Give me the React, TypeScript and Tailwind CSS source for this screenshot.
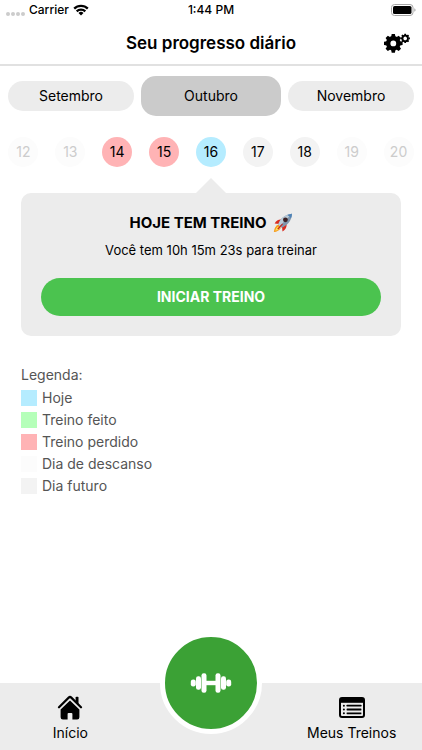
import { useState } from "react"
import clsx from "clsx"

type DayStatus = "today" | "done" | "missed" | "rest" | "future"

const statusColor: Record<DayStatus, string> = {
  today: "bg-[#b5ecff]",
  done: "bg-[#b5ffb9]",
  missed: "bg-[#ffb3b5]",
  rest: "bg-[#fcfcfc]",
  future: "bg-[#f3f3f3]",
}

const months = ["Setembro", "Outubro", "Novembro"]

const days: { day: number; status: DayStatus }[] = [
  { day: 12, status: "rest" },
  { day: 13, status: "rest" },
  { day: 14, status: "missed" },
  { day: 15, status: "missed" },
  { day: 16, status: "today" },
  { day: 17, status: "future" },
  { day: 18, status: "future" },
  { day: 19, status: "rest" },
  { day: 20, status: "rest" },
]

const legend: { label: string; status: DayStatus }[] = [
  { label: "Hoje", status: "today" },
  { label: "Treino feito", status: "done" },
  { label: "Treino perdido", status: "missed" },
  { label: "Dia de descanso", status: "rest" },
  { label: "Dia futuro", status: "future" },
]

function WifiIcon() {
  return (
    <svg viewBox="0 0 16 12" className="h-3 w-4" aria-hidden="true">
      <g fill="none" stroke="black" strokeWidth="2.3">
        <path d="M1.2 4.6a9.7 9.7 0 0 1 13.6 0" />
        <path d="M3.7 7.4a6.1 6.1 0 0 1 8.6 0" />
      </g>
      <path d="M5.5 9.1a3.5 3.5 0 0 1 5 0L8 11.6z" />
    </svg>
  )
}

function BatteryIcon() {
  return (
    <svg viewBox="0 0 25 12" className="h-3 w-[25px]" aria-hidden="true">
      <rect x="0.5" y="0.5" width="21.5" height="11" rx="3" fill="none" stroke="#a6a6a6" />
      <rect x="2" y="2" width="18.5" height="8" rx="1.6" />
      <path d="M23.3 4.2q1.3.6 1.3 1.8t-1.3 1.8z" fill="#a6a6a6" />
    </svg>
  )
}

function GearsIcon() {
  const angles = [0, 45, 90, 135]
  return (
    <svg viewBox="0 0 26 20" className="h-5 w-[26px]" aria-hidden="true">
      <g transform="translate(9.3 10.4)">
        <circle r="5.1" fill="none" stroke="black" strokeWidth="4.4" />
        {angles.map((a) => (
          <path key={a} transform={`rotate(${a})`} d="M-2.2-6.4-1.6-9.3h3.2L2.2-6.4zM-2.2 6.4l.6 2.9h3.2L2.2 6.4z" />
        ))}
      </g>
      <g transform="translate(21.2 5.4)">
        <circle r="2.7" fill="none" stroke="black" strokeWidth="1.8" />
        {angles.map((a) => (
          <path key={a} transform={`rotate(${a})`} d="M-1.1-3.1-.8-4.7H.8L1.1-3.1zM-1.1 3.1l.3 1.6H.8L1.1 3.1z" />
        ))}
      </g>
    </svg>
  )
}

function RocketIcon() {
  return (
    <svg viewBox="0 0 20 20" className="h-5 w-5" role="img" aria-label="Foguete">
      <path d="M5.5 11.5Q1.5 13 .8 19q4.8-.3 7-4z" fill="#f59a1c" />
      <path d="M5 13.5q-2.2 1.2-2.8 4.2 3-.3 4.6-2.3z" fill="#ffe25a" />
      <path d="M9 6.5Q4 5.8 1.6 10.6L6.2 11z" fill="#d92c20" />
      <path d="M13.6 10.8q.6 5-4.1 7.7L9 14z" fill="#d92c20" />
      <path d="M5.2 11.4C7.5 5.5 11.5 1.6 19 .8c-.6 7.6-4.8 11.6-10.4 14z" fill="#7f96ad" />
      <path d="M5.2 11.4C7.5 5.5 11.5 1.6 19 .8L6.8 13z" fill="#b9cbd8" />
      <path d="M14.2 1.9Q16.4 1 19 .8q-.2 2.7-1 4.8-1-2.6-3.8-3.7z" fill="#4d82b7" />
      <circle cx="12.4" cy="6.8" r="2.4" fill="#3c2023" />
      <path d="m4.2 15.8 5-5.2.8.7-4.7 5.2z" fill="#c9251d" />
    </svg>
  )
}

function HomeIcon() {
  return (
    <svg viewBox="0 0 26 25" className="h-[25px] w-[26px]" aria-hidden="true">
      <path d="M18.6 2.6q0-.9.9-.9h1.1q.9 0 .9.9v6.6L18.6 6.5z" />
      <path
        d="M2 12.3 11.7 2.6q1.3-1.2 2.6 0L24 12.3"
        fill="none"
        stroke="black"
        strokeWidth="2.2"
        strokeLinecap="round"
      />
      <path d="M13 5.6 22.4 14.6v7.6q0 2.3-2.3 2.3h-4.7v-5.6q0-.9-.9-.9h-3q-.9 0-.9.9v5.6H5.9q-2.3 0-2.3-2.3v-7.6z" />
    </svg>
  )
}

function DumbbellIcon() {
  return (
    <svg viewBox="0 0 42 20" className="h-5 w-[42px]" fill="white" aria-hidden="true">
      <rect x="0.8" y="6.5" width="5" height="7" rx="2.3" />
      <rect x="6" y="3.2" width="5" height="13.6" rx="2.2" />
      <rect x="11.5" y="0.3" width="5" height="19.4" rx="2.2" />
      <rect x="14" y="7.8" width="14" height="4.4" />
      <rect x="25.5" y="0.3" width="5" height="19.4" rx="2.2" />
      <rect x="31" y="3.2" width="5" height="13.6" rx="2.2" />
      <rect x="36.2" y="6.5" width="5" height="7" rx="2.3" />
    </svg>
  )
}

function ListIcon() {
  return (
    <svg viewBox="0 0 26 21" className="h-[21px] w-[26px]" aria-hidden="true">
      <rect x="1" y="1" width="24" height="19" rx="2" fill="none" stroke="black" strokeWidth="2" />
      <path d="M1 2h24v3.8H1z" />
      {[8.4, 12.2, 16].map((y) => (
        <g key={y}>
          <circle cx="4.9" cy={y + 0.3} r="1" />
          <rect x="7.6" y={y - 0.6} width="14.8" height="1.8" rx="0.4" />
        </g>
      ))}
    </svg>
  )
}

function StatusBar() {
  return (
    <div className="grid h-5 grid-cols-3 items-center px-1.5 text-xs font-medium">
      <div className="flex items-center gap-1">
        <span className="flex gap-px pt-2" aria-hidden="true">
          {[0, 1, 2, 3].map((i) => (
            <span key={i} className="size-1 rounded-full bg-[#cccccc]" />
          ))}
        </span>
        <span>Carrier</span>
        <WifiIcon />
      </div>
      <span className="text-center">1:44 PM</span>
      <div className="flex justify-end">
        <BatteryIcon />
      </div>
    </div>
  )
}

export default function App() {
  const [month, setMonth] = useState("Outubro")

  return (
    <div className="flex min-h-screen flex-col bg-white font-['Inter',sans-serif] text-black">
      <header className="border-b-2 border-[#e1e1e1]">
        <StatusBar />
        <div className="grid h-11 grid-cols-[1fr_auto_1fr] items-center px-3 pb-0.5 pt-1">
          <h1 className="col-start-2 text-[17px] leading-6 font-semibold">Seu progresso diário</h1>
          <button type="button" aria-label="Configurações" className="justify-self-end">
            <GearsIcon />
          </button>
        </div>
      </header>

      <main className="flex-1">
        <div className="flex items-center gap-[7px] px-2 pt-2.5">
          {months.map((m) => (
            <button
              key={m}
              type="button"
              onClick={() => setMonth(m)}
              className={clsx(
                "basis-0 rounded-[15px] text-sm",
                m === month ? "h-10 grow-10 bg-[#cbcbcb]" : "h-[30px] grow-9 bg-[#ececec]"
              )}
            >
              {m}
            </button>
          ))}
        </div>

        <div className="grid grid-cols-9 justify-items-center pt-[21px]">
          {days.map(({ day, status }) => (
            <button
              key={day}
              type="button"
              className={clsx(
                "size-[30px] rounded-full text-sm",
                statusColor[status],
                status === "rest" && "text-[#cccccc]"
              )}
            >
              {day}
            </button>
          ))}
        </div>

        <section className="px-[21px] pt-[11px]">
          {/* arrow pointing at the selected day */}
          <svg viewBox="0 0 30 15" className="mx-auto block h-[15px] w-[30px]" aria-hidden="true">
            <path d="M15 0 30 15H0z" fill="#ececec" />
          </svg>
          <div className="rounded-[10px] bg-[#ececec] p-5 text-center">
            <h2 className="flex h-5 items-center justify-center gap-1.5 text-[15px] font-bold">
              HOJE TEM TREINO <RocketIcon />
            </h2>
            <p className="pt-[7px] text-[13px] leading-5">Você tem 10h 15m 23s para treinar</p>
            <button
              type="button"
              className="mt-[18px] h-[38px] w-full rounded-full bg-[#4bc34f] text-sm font-bold text-white"
            >
              INICIAR TREINO
            </button>
          </div>
        </section>

        <section className="px-[21px] pt-[27px] text-sm text-[#555555]">
          <h3 className="leading-6">Legenda:</h3>
          <ul>
            {legend.map(({ label, status }) => (
              <li key={label} className="flex h-[22px] items-center gap-[5px]">
                <span className={clsx("size-4", statusColor[status])} />
                {label}
              </li>
            ))}
          </ul>
        </section>
      </main>

      <nav className="grid h-[67px] grid-cols-3 justify-items-center bg-[#ececec] text-sm">
        <a href="#inicio" className="flex flex-col items-center pt-2.5">
          <span className="flex h-7 items-center">
            <HomeIcon />
          </span>
          <span className="leading-6">Início</span>
        </a>
        <button
          type="button"
          aria-label="Treinar"
          className="-mt-[51px] flex size-[102px] items-center justify-center rounded-full border-5 border-white bg-[#3ba135]"
        >
          <DumbbellIcon />
        </button>
        <a href="#treinos" className="flex flex-col items-center pt-2.5">
          <span className="flex h-7 items-center">
            <ListIcon />
          </span>
          <span className="leading-6">Meus Treinos</span>
        </a>
      </nav>
    </div>
  )
}
